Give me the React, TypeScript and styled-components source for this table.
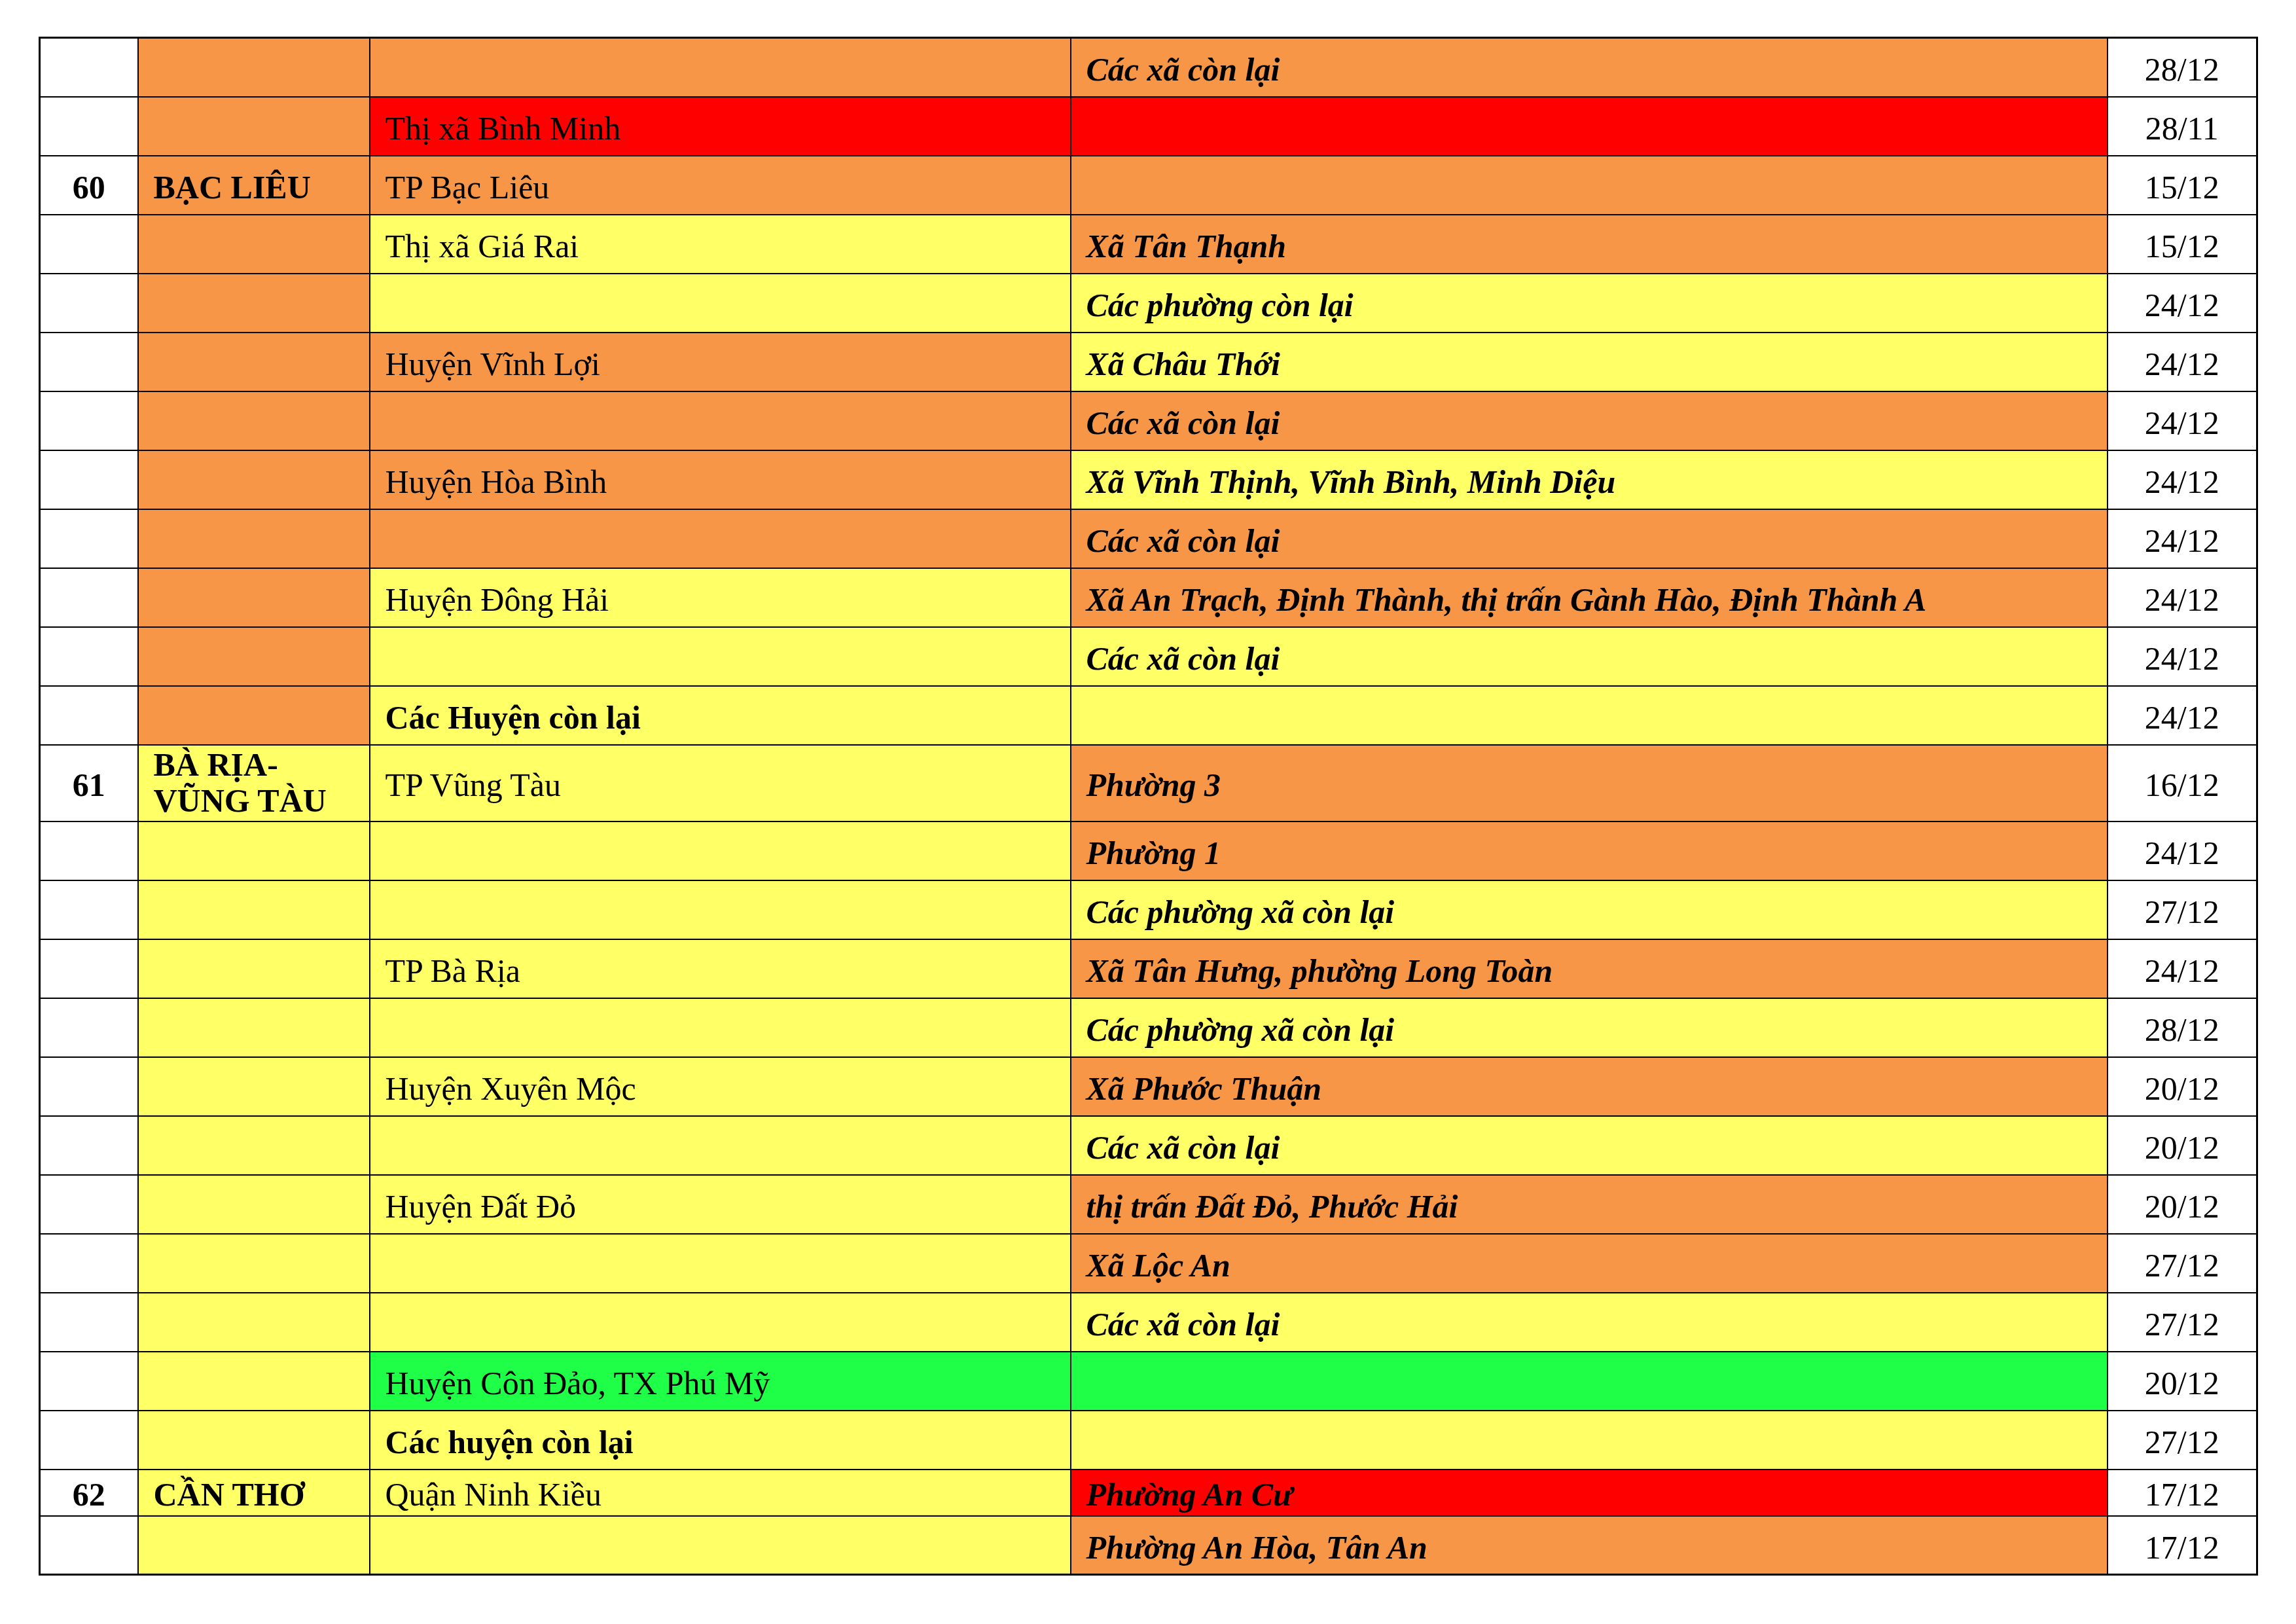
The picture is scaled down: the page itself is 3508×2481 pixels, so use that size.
import React from "react";
import styled, { createGlobalStyle } from "styled-components";

const GlobalStyle = createGlobalStyle`
  html, body {
    margin: 0;
    padding: 0;
    background: #ffffff;
  }
  body {
    font-family: "Liberation Serif", "Times New Roman", serif;
    color: #000000;
  }
`;

const mau = {
  cam: "#f79646",
  vang: "#ffff66",
  do: "#ff0000",
  xanh: "#20ff48",
  trang: "#ffffff",
};

type Mau = keyof typeof mau;

const Trang = styled.div`
  width: 3508px;
  height: 2481px;
  box-sizing: border-box;
  padding: 56px 0 0 59px;
`;

const Bang = styled.table`
  width: 3388px;
  table-layout: fixed;
  border-collapse: collapse;
  border: 3px solid #000;
  font-size: 50px;
  line-height: 1.15;
`;

const Cot = styled.col<{ $rong: number }>`
  width: ${(p) => p.$rong}px;
`;

const Hang = styled.tr<{ $cao: number }>`
  height: ${(p) => p.$cao}px;
`;

const O = styled.td<{
  $nen?: Mau;
  $dam?: boolean;
  $nghieng?: boolean;
  $giua?: boolean;
  $haiDong?: boolean;
}>`
  border: 2px solid #000;
  background: ${(p) => mau[p.$nen || "trang"]};
  font-weight: ${(p) => (p.$dam ? 700 : 400)};
  font-style: ${(p) => (p.$nghieng ? "italic" : "normal")};
  text-align: ${(p) => (p.$giua ? "center" : "left")};
  line-height: ${(p) => (p.$haiDong ? 1.1 : 1.15)};
  padding: ${(p) => (p.$haiDong ? "0" : "8px")} ${(p) => (p.$giua ? "0" : "20px")} 0
    ${(p) => (p.$giua ? "0" : "23px")};
  vertical-align: middle;
  overflow: hidden;
`;

type Dong = {
  stt?: string;
  tinh?: string;
  nenTinh: Mau;
  huyen?: string;
  huyenDam?: boolean;
  nenHuyen: Mau;
  xa?: string;
  nenXa: Mau;
  ngay: string;
  cao?: number;
};

const cacCot = [150, 354, 1071, 1584, 229];

const duLieu: Dong[] = [
  { nenTinh: "cam", nenHuyen: "cam", xa: "Các xã còn lại", nenXa: "cam", ngay: "28/12" },
  { nenTinh: "cam", huyen: "Thị xã Bình Minh", nenHuyen: "do", nenXa: "do", ngay: "28/11" },
  { stt: "60", tinh: "BẠC LIÊU", nenTinh: "cam", huyen: "TP Bạc Liêu", nenHuyen: "cam", nenXa: "cam", ngay: "15/12" },
  { nenTinh: "cam", huyen: "Thị xã Giá Rai", nenHuyen: "vang", xa: "Xã Tân Thạnh", nenXa: "cam", ngay: "15/12" },
  { nenTinh: "cam", nenHuyen: "vang", xa: "Các phường còn lại", nenXa: "vang", ngay: "24/12" },
  { nenTinh: "cam", huyen: "Huyện Vĩnh Lợi", nenHuyen: "cam", xa: "Xã Châu Thới", nenXa: "vang", ngay: "24/12" },
  { nenTinh: "cam", nenHuyen: "cam", xa: "Các xã còn lại", nenXa: "cam", ngay: "24/12" },
  { nenTinh: "cam", huyen: "Huyện Hòa Bình", nenHuyen: "cam", xa: "Xã Vĩnh Thịnh, Vĩnh Bình, Minh Diệu", nenXa: "vang", ngay: "24/12" },
  { nenTinh: "cam", nenHuyen: "cam", xa: "Các xã còn lại", nenXa: "cam", ngay: "24/12" },
  { nenTinh: "cam", huyen: "Huyện Đông Hải", nenHuyen: "vang", xa: "Xã An Trạch, Định Thành, thị trấn Gành Hào, Định Thành A", nenXa: "cam", ngay: "24/12" },
  { nenTinh: "cam", nenHuyen: "vang", xa: "Các xã còn lại", nenXa: "vang", ngay: "24/12" },
  { nenTinh: "cam", huyen: "Các Huyện còn lại", huyenDam: true, nenHuyen: "vang", nenXa: "vang", ngay: "24/12" },
  { stt: "61", tinh: "BÀ RỊA-VŨNG TÀU", nenTinh: "vang", huyen: "TP Vũng Tàu", nenHuyen: "vang", xa: "Phường 3", nenXa: "cam", ngay: "16/12", cao: 117 },
  { nenTinh: "vang", nenHuyen: "vang", xa: "Phường 1", nenXa: "cam", ngay: "24/12" },
  { nenTinh: "vang", nenHuyen: "vang", xa: "Các phường xã còn lại", nenXa: "vang", ngay: "27/12" },
  { nenTinh: "vang", huyen: "TP Bà Rịa", nenHuyen: "vang", xa: "Xã Tân Hưng, phường Long Toàn", nenXa: "cam", ngay: "24/12" },
  { nenTinh: "vang", nenHuyen: "vang", xa: "Các phường xã còn lại", nenXa: "vang", ngay: "28/12" },
  { nenTinh: "vang", huyen: "Huyện Xuyên Mộc", nenHuyen: "vang", xa: "Xã Phước Thuận", nenXa: "cam", ngay: "20/12" },
  { nenTinh: "vang", nenHuyen: "vang", xa: "Các xã còn lại", nenXa: "vang", ngay: "20/12" },
  { nenTinh: "vang", huyen: "Huyện Đất Đỏ", nenHuyen: "vang", xa: "thị trấn Đất Đỏ, Phước Hải", nenXa: "cam", ngay: "20/12" },
  { nenTinh: "vang", nenHuyen: "vang", xa: "Xã Lộc An", nenXa: "cam", ngay: "27/12" },
  { nenTinh: "vang", nenHuyen: "vang", xa: "Các xã còn lại", nenXa: "vang", ngay: "27/12" },
  { nenTinh: "vang", huyen: "Huyện Côn Đảo, TX Phú Mỹ", nenHuyen: "xanh", nenXa: "xanh", ngay: "20/12" },
  { nenTinh: "vang", huyen: "Các huyện còn lại", huyenDam: true, nenHuyen: "vang", nenXa: "vang", ngay: "27/12" },
  { stt: "62", tinh: "CẦN THƠ", nenTinh: "vang", huyen: "Quận Ninh Kiều", nenHuyen: "vang", xa: "Phường An Cư", nenXa: "do", ngay: "17/12", cao: 71 },
  { nenTinh: "vang", nenHuyen: "vang", xa: "Phường An Hòa, Tân An", nenXa: "cam", ngay: "17/12" },
];

export default function App() {
  return (
    <>
      <GlobalStyle />
      <Trang>
        <Bang>
          <colgroup>
            {cacCot.map((r, i) => (
              <Cot key={i} $rong={r} />
            ))}
          </colgroup>
          <tbody>
            {duLieu.map((d, i) => (
              <Hang key={i} $cao={d.cao ?? 90}>
                <O $dam $giua>{d.stt}</O>
                <O $nen={d.nenTinh} $dam $haiDong={d.stt === "61"}>{d.tinh}</O>
                <O $nen={d.nenHuyen} $dam={d.huyenDam}>{d.huyen}</O>
                <O $nen={d.nenXa} $dam $nghieng>{d.xa}</O>
                <O $giua>{d.ngay}</O>
              </Hang>
            ))}
          </tbody>
        </Bang>
      </Trang>
    </>
  );
}
